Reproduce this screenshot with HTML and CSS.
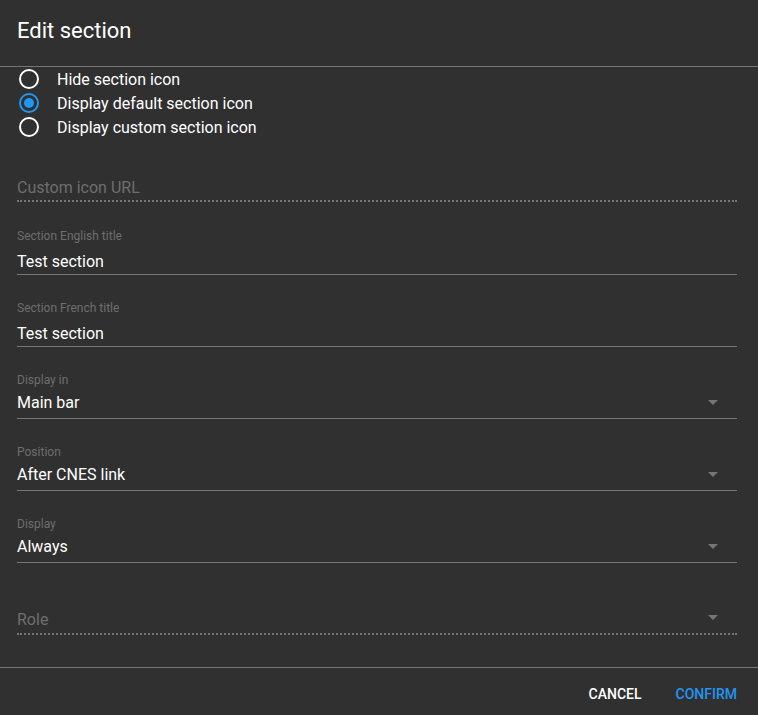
FILE: index.html
```html
<!DOCTYPE html>
<html lang="en">
<head>
<meta charset="utf-8">
<title>Edit section</title>
<link rel="stylesheet" href="styles.css">
</head>
<body>
<div class="dialog">
  <h3 class="dialog-title">Edit section</h3>
  <div class="dialog-body">
    <div class="radio-group">
      <label class="radio"><span class="radio-icon"></span><span class="radio-text">Hide section icon</span></label>
      <label class="radio checked"><span class="radio-icon"></span><span class="radio-text">Display default section icon</span></label>
      <label class="radio"><span class="radio-icon"></span><span class="radio-text">Display custom section icon</span></label>
    </div>

    <div class="field field-hint">
      <div class="input dotted"><span class="hint">Custom icon URL</span></div>
    </div>

    <div class="field">
      <div class="label">Section English title</div>
      <div class="input text">Test section</div>
    </div>

    <div class="field">
      <div class="label">Section French title</div>
      <div class="input text">Test section</div>
    </div>

    <div class="field">
      <div class="label">Display in</div>
      <div class="input select"><span class="value">Main bar</span><svg class="arrow" viewBox="0 0 24 24"><path d="M7 10l5 5 5-5z"/></svg></div>
    </div>

    <div class="field">
      <div class="label">Position</div>
      <div class="input select"><span class="value">After CNES link</span><svg class="arrow" viewBox="0 0 24 24"><path d="M7 10l5 5 5-5z"/></svg></div>
    </div>

    <div class="field">
      <div class="label">Display</div>
      <div class="input select"><span class="value">Always</span><svg class="arrow" viewBox="0 0 24 24"><path d="M7 10l5 5 5-5z"/></svg></div>
    </div>

    <div class="field field-role">
      <div class="input select dotted"><span class="value hint">Role</span><svg class="arrow arrow-up" viewBox="0 0 24 24"><path d="M7 10l5 5 5-5z"/></svg></div>
    </div>
  </div>
  <div class="dialog-actions">
    <button class="btn">Cancel</button>
    <button class="btn primary">Confirm</button>
  </div>
</div>
</body>
</html>
```

FILE: styles.css
```css
html, body {
  margin: 0;
  padding: 0;
  background: #303030;
}

body {
  font-family: Roboto, "Liberation Sans", sans-serif;
  color: #fff;
}

.dialog {
  width: 758px;
  height: 715px;
  background: #303030;
  overflow: hidden;
}

.dialog-title {
  margin: 0;
  height: 67px;
  box-sizing: border-box;
  padding: 15px 17px 0;
  font-size: 22px;
  font-weight: 400;
  line-height: 32px;
  color: #fff;
  border-bottom: 1px solid #757575;
}

.dialog-body {
  padding: 0 21px 0 17px;
  height: 601px;
  box-sizing: border-box;
  border-bottom: 1px solid #757575;
}

.radio-group {
  display: flex;
  flex-direction: column;
}

.radio {
  display: flex;
  align-items: center;
  height: 24px;
  font-size: 16px;
  color: #fff;
}

.radio-icon {
  width: 20px;
  height: 20px;
  margin: 2px;
  box-sizing: border-box;
  border: 2px solid #fff;
  border-radius: 50%;
  display: flex;
  align-items: center;
  justify-content: center;
}

.radio.checked .radio-icon {
  border-color: #2196f3;
}

.radio.checked .radio-icon::after {
  content: "";
  width: 10px;
  height: 10px;
  border-radius: 50%;
  background: #2196f3;
}

.radio-text {
  margin-left: 16px;
  line-height: 24px;
  padding-top: 1px;
}

.field {
  padding-top: 18px;
  margin-bottom: 7px;
}

.label {
  font-size: 12px;
  line-height: 16px;
  color: #6e6e6e;
}

.input {
  font-size: 16px;
  line-height: 24px;
  color: #fff;
  border-bottom: 1px solid #757575;
}

.input.text {
  margin-top: 5px;
  height: 24px;
  padding-top: 1px;
}

.input.select {
  margin-top: 2px;
  padding: 1px 0 3px;
  display: flex;
  align-items: center;
}

.input.select .value {
  flex: 1;
}

.arrow {
  width: 24px;
  height: 24px;
  margin-right: 12px;
  fill: #757575;
  flex: none;
  position: relative;
  top: -1px;
}

.input.dotted {
  border-bottom: 2px dotted #757575;
}

.hint {
  color: #6e6e6e;
}

.field-hint {
  padding-top: 36px;
  margin-bottom: 8px;
}

.field-hint .input {
  height: 24px;
  padding-top: 1px;
}

.field-role {
  padding-top: 37px;
  margin-bottom: 0;
}

.field-role .input.select {
  margin-top: 0;
  padding: 1px 0;
}

.arrow-up {
  top: -3px;
}

.dialog-actions {
  display: flex;
  justify-content: flex-end;
  align-items: center;
  height: 52px;
  padding-right: 13px;
}

.btn {
  font-family: Roboto, "Liberation Sans", sans-serif;
  font-size: 14px;
  font-weight: 500;
  text-transform: uppercase;
  color: #fff;
  background: transparent;
  border: none;
  padding: 0 8px;
  height: 36px;
  margin-left: 18px;
  cursor: pointer;
}

.btn.primary {
  color: #2196f3;
}
```
